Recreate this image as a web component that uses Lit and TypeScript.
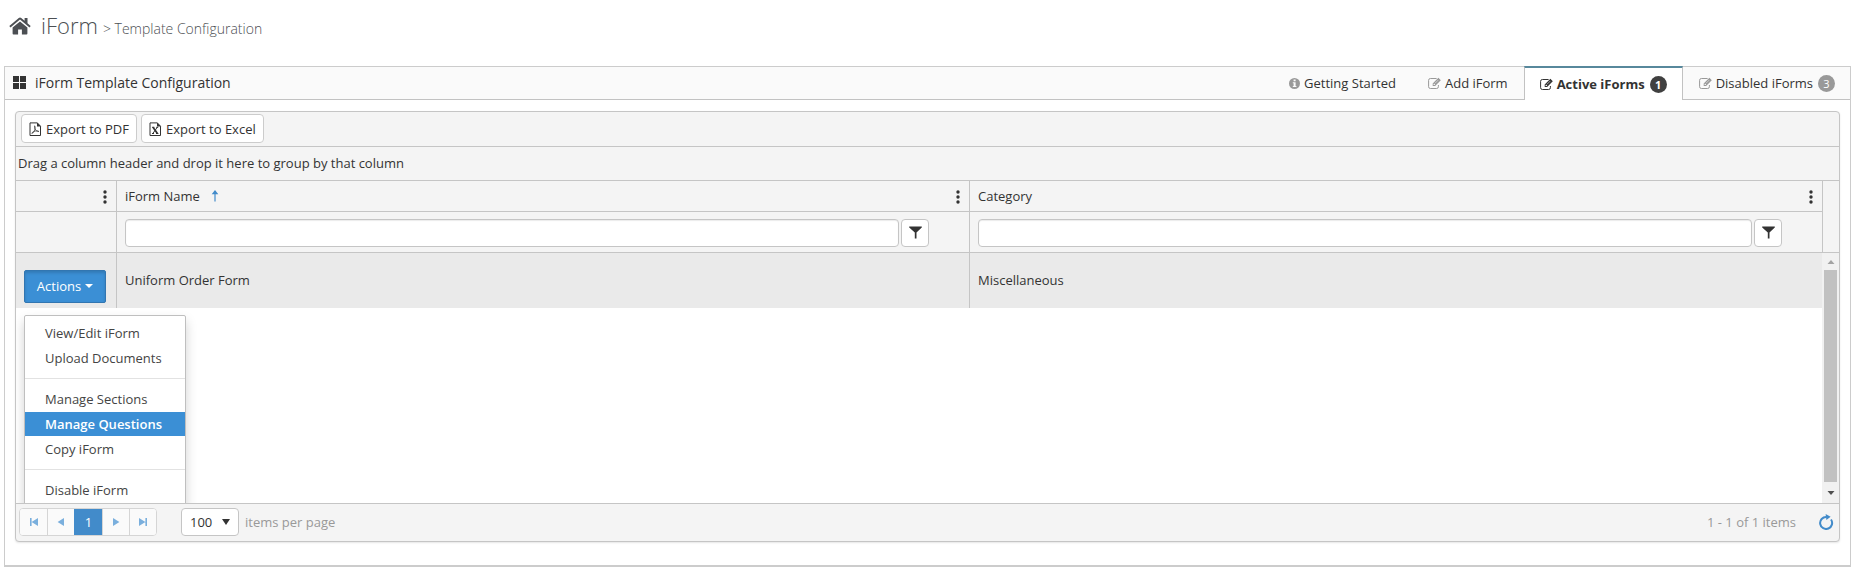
import { LitElement, html, css, svg, nothing } from "lit";
import { customElement, state } from "lit/decorators.js";
import { classMap } from "lit/directives/class-map.js";

type TabIcon = "info" | "edit";

interface Tab {
  id: string;
  label: string;
  icon: TabIcon;
  count?: number;
}

const TABS: Tab[] = [
  { id: "start", label: "Getting Started", icon: "info" },
  { id: "add", label: "Add iForm", icon: "edit" },
  { id: "active", label: "Active iForms", icon: "edit", count: 1 },
  { id: "disabled", label: "Disabled iForms", icon: "edit", count: 3 },
];

const MENU: string[][] = [
  ["View/Edit iForm", "Upload Documents"],
  ["Manage Sections", "Manage Questions", "Copy iForm"],
  ["Disable iForm"],
];

const ROWS = [{ name: "Uniform Order Form", category: "Miscellaneous" }];

const homeIcon = html`<svg width="22" height="18" viewBox="0 0 22 18" aria-hidden="true">
  <path fill="#4c4f53" d="M11 4.4 3.6 10.6V16.6q0 .9.9.9H9.1V12.4H12.9V17.5H17.5q.9 0 .9-.9V10.6ZM21.7 9 18.5 6.3V1H15.6V3.8L12.2 1Q11 .1 9.8 1L.3 9 1.5 10.4 11 2.6 20.5 10.4Z"/>
</svg>`;

const gridIcon = html`<svg width="14" height="14" viewBox="0 0 14 14" aria-hidden="true">
  <path fill="#333" d="M0 0H6V6H0ZM7 0H13V6H7ZM0 7H6V13H0ZM7 7H13V13H7Z"/>
</svg>`;

const infoIcon = html`<svg width="11" height="13" viewBox="0 0 11 13" aria-hidden="true">
  <circle cx="5.5" cy="6.5" r="5.5" fill="currentColor"/>
  <path fill="#fafafa" d="M4.6 2.4H6.6V4.2H4.6ZM3.8 5.2H6.6V8.9H7.4V10H3.8V8.9H4.6V6.3H3.8Z"/>
</svg>`;

const editIcon = html`<svg width="13" height="13" viewBox="0 0 13 13" aria-hidden="true">
  <path fill="none" stroke="currentColor" d="M8.6 1.5H2.4Q.6 1.5.6 3.3V9.7Q.6 11.5 2.4 11.5H8.6Q10.4 11.5 10.4 9.7V8"/>
  <path fill="currentColor" fill-rule="evenodd" d="M4.7 6.5 10.4.8 12.8 3.2 7.1 8.9H4.7ZM5.6 6.9V8H6.7L7.2 7.5 6.1 6.4ZM7 6 7.3 6.3 10.4 3.2 10.1 2.9Z"/>
</svg>`;

const fileShape = svg`<path fill="#fff" stroke="#333" stroke-width="1" d="M1 .9H8.3L11.5 4.2V13.5H1Z"/>
  <path fill="#333" d="M8 .4 12 4.5H8Z"/>`;

const pdfIcon = html`<svg width="13" height="14" viewBox="0 0 13 14" aria-hidden="true">
  ${fileShape}
  <path fill="none" stroke="#555" stroke-width=".9" d="M5.6 3.8Q5.2 6 6.6 8 8 9.8 10 9.6 9.6 8.4 6.2 9 3 9.8 2.8 11.4 4.4 11.6 5.8 7.8 6.6 5 5.6 3.8"/>
</svg>`;

const excelIcon = html`<svg width="13" height="14" viewBox="0 0 13 14" aria-hidden="true">
  ${fileShape}
  <path fill="none" stroke="#333" stroke-width="1.7" d="M4 5.2 8.4 11.6"/>
  <path fill="none" stroke="#333" stroke-width="1" d="M8.3 5.2 3.8 11.6M3 5.3H5.4M7.2 5.3H9.2M3 11.5H5M7 11.5H9.4"/>
</svg>`;

const dotsIcon = html`<svg width="4" height="14" viewBox="0 0 4 14" aria-hidden="true">
  <circle fill="#333" cx="2" cy="2" r="1.7"/><circle fill="#333" cx="2" cy="7" r="1.7"/><circle fill="#333" cx="2" cy="12" r="1.7"/>
</svg>`;

const sortIcon = html`<svg width="8" height="12" viewBox="0 0 8 12" aria-hidden="true">
  <path fill="#428bca" d="M4 0 7.3 4.2H4.6V11.5H3.4V4.2H.7Z"/>
</svg>`;

const funnelIcon = html`<svg width="13" height="13" viewBox="0 0 13 13" aria-hidden="true">
  <path fill="#333" d="M.2.6H12.8V1.4L7.5 6.6V12.6H5.8V6.6L.2 1.4Z"/>
</svg>`;

const refreshIcon = html`<svg width="16" height="16" viewBox="0 0 16 16" aria-hidden="true">
  <path fill="none" stroke="#428bca" stroke-width="2" d="M8.5 3A6 6 0 1 0 13 5.5"/>
  <path fill="#428bca" d="M7.6 0 12.6 2.8 8.4 6Z"/>
</svg>`;

const PAGER_PATHS: Record<string, string> = {
  first: "M1 1H2.6V9H1ZM9 1V9L2.6 5Z",
  prev: "M8 1V9L1.6 5Z",
  next: "M2 1V9L8.4 5Z",
  last: "M7.4 1H9V9H7.4ZM1 1V9L7.4 5Z",
};

@customElement("app-root")
export class AppRoot extends LitElement {
  static styles = css`
    :host {
      display: block;
      padding: 11px 4px 16px;
      font-family: "Open Sans", "Noto Sans", sans-serif;
      font-size: 13px;
      line-height: 18px;
      color: #333;
      background: #fff;
    }
    *, *::before, *::after { box-sizing: border-box; }
    button, input, select { font: inherit; color: inherit; margin: 0; }
    button { cursor: pointer; padding: 0; }
    svg { display: block; flex: none; }

    .page-title {
      display: flex;
      align-items: baseline;
      gap: 5px;
      margin: 0 0 27px;
      padding-left: 5px;
      font-size: 22px;
      font-weight: 300;
      line-height: 28px;
      color: #4c4f53;
    }
    .page-title .home { align-self: center; margin: 2px 5px 0 0; }
    .page-title .sub { font-size: 14px; line-height: 18px; }

    .panel { border: 1px solid #ccc; border-bottom-width: 2px; }
    .panel-head {
      display: flex;
      align-items: stretch;
      height: 33px;
      background: #fafafa;
      border-bottom: 1px solid #c2c2c2;
    }
    .panel-title {
      display: flex;
      align-items: center;
      gap: 8px;
      flex: 1;
      margin: 0;
      padding-left: 8px;
      font-size: 14px;
      font-weight: 400;
    }
    .tabs { display: flex; }
    .tab {
      display: flex;
      align-items: center;
      gap: 4px;
      padding: 0 15px;
      border: 0 solid transparent;
      border-width: 0 1px;
      color: #333;
      text-decoration: none;
    }
    .tab:last-child { border-right-width: 0; }
    .tab svg { color: #999; }
    .tab.on {
      margin: -1px 0;
      border-top: 2px solid #57889c;
      border-left-color: #c2c2c2;
      border-right-color: #c2c2c2;
      background: #fff;
      font-weight: 700;
    }
    .tab.on svg { color: #333; }
    .badge {
      width: 17px;
      height: 17px;
      margin-left: 1px;
      border-radius: 50%;
      background: #999;
      color: #fff;
      font-size: 11px;
      font-weight: 400;
      line-height: 17px;
      text-align: center;
    }
    .tab.on .badge { background: #404040; font-weight: 700; }

    .panel-body { padding: 11px 10px 23px; }
    .grid {
      border: 1px solid #c5c5c5;
      border-radius: 4px;
      background: #f4f4f4;
      overflow: hidden;
      box-shadow: 0 1px 2px rgba(0, 0, 0, 0.1);
    }
    .toolbar {
      display: flex;
      gap: 4px;
      padding: 2px 5px 3px;
      border-bottom: 1px solid #c5c5c5;
    }
    .tool {
      display: flex;
      align-items: center;
      gap: 4px;
      height: 29px;
      padding: 0 7px;
      border: 1px solid #ccc;
      border-radius: 4px;
      background: #fff;
    }
    .group-hint { margin: 0; padding: 7px 2px 8px; border-bottom: 1px solid #c5c5c5; }

    .head { display: flex; border-bottom: 1px solid #c5c5c5; }
    .head-gap { width: 17px; border-left: 1px solid #c5c5c5; }
    table { flex: 1; width: 0; table-layout: fixed; border-collapse: separate; border-spacing: 0; }
    .c-actions { width: 100px; }
    th, td { padding: 0 8px; text-align: left; font-weight: 400; }
    th + th, td + td { border-left: 1px solid #c5c5c5; }
    th { height: 31px; border-bottom: 1px solid #c5c5c5; }
    .filters td { height: 40px; padding-top: 1px; }
    .th-in { display: flex; align-items: center; gap: 11px; }
    .dots {
      display: flex;
      margin-left: auto;
      padding: 1px 1px 0;
      border: 0;
      background: none;
    }
    .filter { display: flex; gap: 2px; padding-right: 32px; }
    .filter input {
      flex: 1;
      min-width: 0;
      height: 28px;
      padding: 0 6px;
      border: 1px solid #c5c5c5;
      border-radius: 4px;
      background: #fff;
      box-shadow: inset 0 1px 1px rgba(0, 0, 0, 0.08);
    }
    .funnel {
      display: grid;
      place-items: center;
      width: 28px;
      height: 28px;
      border: 1px solid #c5c5c5;
      border-radius: 4px;
      background: #fff;
    }

    .content {
      display: flex;
      position: relative;
      height: 250px;
      overflow: hidden;
      background: #fff;
      align-items: flex-start;
    }
    .row td { height: 55px; padding-bottom: 1px; background: #eaeaea; }
    .row td:first-child { padding-top: 12px; }
    .action {
      display: flex;
      align-items: center;
      justify-content: center;
      gap: 4px;
      width: 82px;
      height: 33px;
      border: 1px solid #3276b1;
      border-radius: 2px;
      background: #3b8fd5;
      color: #fff;
      box-shadow: inset 0 2px 3px rgba(0, 0, 0, 0.15);
    }
    .menu {
      position: absolute;
      top: 62px;
      left: 8px;
      display: flex;
      flex-direction: column;
      gap: 1px;
      width: 162px;
      margin: 0;
      padding: 5px 0;
      border: 1px solid #bfbfbf;
      border-radius: 2px;
      background: #fff;
      box-shadow: 0 6px 12px rgba(0, 0, 0, 0.18);
      list-style: none;
    }
    .menu a {
      display: block;
      padding: 0 20px;
      line-height: 24px;
      color: #444;
      text-decoration: none;
    }
    .menu a.hot { background: #3b8fd5; color: #fff; font-weight: 600; }
    .sep { height: 1px; margin: 7px 0; background: #e2e2e2; }

    .scroll {
      display: flex;
      flex-direction: column;
      align-items: center;
      gap: 4px;
      width: 17px;
      height: 100%;
      padding: 5px 0;
      background: #f1f1f1;
    }
    .thumb { flex: 1; width: 13px; background: #c1c1c1; }

    .pager {
      display: flex;
      align-items: center;
      height: 38px;
      padding: 0 5px 1px 3px;
      border-top: 1px solid #c5c5c5;
      color: #999;
    }
    .pages {
      display: flex;
      border: 1px solid #d5d5d5;
      border-radius: 4px;
      background: #fff;
      overflow: hidden;
    }
    .pages button {
      display: grid;
      place-items: center;
      width: 27px;
      height: 26px;
      border: 0;
      background: #fafafa;
      color: #7aafdd;
    }
    .pages button + button { border-left: 1px solid #d5d5d5; }
    .pages button.on { width: 28px; background: #428bca; color: #fff; border-color: #428bca; }
    .size { display: flex; align-items: center; gap: 6px; margin-left: 24px; }
    .size-box { display: grid; align-items: center; width: 58px; }
    .size-box > * { grid-area: 1 / 1; }
    .size-box svg { justify-self: end; margin-right: 9px; pointer-events: none; }
    .size select {
      appearance: none;
      width: 100%;
      height: 28px;
      padding: 0 8px;
      border: 1px solid #c5c5c5;
      border-radius: 4px;
      background: #fff;
      color: #333;
    }
    .info { margin-left: auto; }
    .refresh { margin-left: 22px; border: 0; background: none; }
  `;

  @state() private tab = "active";
  @state() private hot = "Manage Questions";
  @state() private open = true;

  private renderTab(t: Tab) {
    const on = t.id === this.tab;
    return html`<a
      href="#${t.id}"
      class=${classMap({ tab: true, on })}
      aria-current=${on ? "page" : "false"}
      @click=${() => (this.tab = t.id)}
      >${t.icon === "info" ? infoIcon : editIcon}<span>${t.label}</span
      >${t.count ? html`<span class="badge">${t.count}</span>` : nothing}</a
    >`;
  }

  private renderDots(name: string) {
    return html`<button class="dots" aria-label="${name} column settings">${dotsIcon}</button>`;
  }

  private renderFilter(name: string) {
    return html`<div class="filter">
      <input type="text" aria-label="Filter ${name}" />
      <button class="funnel" aria-label="${name} filter options">${funnelIcon}</button>
    </div>`;
  }

  private renderPageButton(kind: string) {
    return html`<button aria-label="Go to the ${kind} page">
      <svg width="10" height="10" viewBox="0 0 10 10" aria-hidden="true">
        <path fill="currentColor" d=${PAGER_PATHS[kind]} />
      </svg>
    </button>`;
  }

  private renderMenu() {
    return html`<ul class="menu">
      ${MENU.map(
        (group, i) => html`${i ? html`<li class="sep" role="separator"></li>` : nothing}
        ${group.map(
          (item) => html`<li>
            <a href="#" class=${classMap({ hot: item === this.hot })} @mouseenter=${() => (this.hot = item)}>${item}</a>
          </li>`
        )}`
      )}
    </ul>`;
  }

  private cols = () => html`<colgroup><col class="c-actions" /><col /><col /></colgroup>`;

  render() {
    return html`
      <h1 class="page-title">
        <span class="home">${homeIcon}</span>
        <span>iForm</span>
        <span class="sub">&gt; Template Configuration</span>
      </h1>
      <section class="panel">
        <header class="panel-head">
          <h2 class="panel-title">${gridIcon}<span>iForm Template Configuration</span></h2>
          <nav class="tabs">${TABS.map((t) => this.renderTab(t))}</nav>
        </header>
        <div class="panel-body">
          <div class="grid">
            <div class="toolbar">
              <button class="tool">${pdfIcon}Export to PDF</button>
              <button class="tool">${excelIcon}Export to Excel</button>
            </div>
            <p class="group-hint">Drag a column header and drop it here to group by that column</p>
            <div class="head">
              <table>
                ${this.cols()}
                <thead>
                  <tr>
                    <th><div class="th-in">${this.renderDots("Actions")}</div></th>
                    <th><div class="th-in">iForm Name ${sortIcon}${this.renderDots("iForm Name")}</div></th>
                    <th><div class="th-in">Category ${this.renderDots("Category")}</div></th>
                  </tr>
                  <tr class="filters">
                    <td></td>
                    <td>${this.renderFilter("iForm Name")}</td>
                    <td>${this.renderFilter("Category")}</td>
                  </tr>
                </thead>
              </table>
              <div class="head-gap"></div>
            </div>
            <div class="content">
              <table>
                ${this.cols()}
                <tbody>
                  ${ROWS.map(
                    (r) => html`<tr class="row">
                      <td>
                        <button class="action" aria-expanded=${this.open} @click=${() => (this.open = !this.open)}>
                          Actions
                          <svg width="8" height="4" viewBox="0 0 8 4" aria-hidden="true"><path fill="#fff" d="M0 0H8L4 4Z" /></svg>
                        </button>
                      </td>
                      <td>${r.name}</td>
                      <td>${r.category}</td>
                    </tr>`
                  )}
                </tbody>
              </table>
              <div class="scroll" aria-hidden="true">
                <svg width="8" height="8" viewBox="0 0 8 8"><path fill="#a3a3a3" d="M.5 6H7.5L4 2Z" /></svg>
                <div class="thumb"></div>
                <svg width="8" height="12" viewBox="0 0 8 12"><path fill="#505050" d="M.5 5H7.5L4 9Z" /></svg>
              </div>
              ${this.open ? this.renderMenu() : nothing}
            </div>
            <footer class="pager">
              <div class="pages">
                ${this.renderPageButton("first")}${this.renderPageButton("prev")}
                <button class="on" aria-current="page">1</button>
                ${this.renderPageButton("next")}${this.renderPageButton("last")}
              </div>
              <label class="size">
                <span class="size-box">
                  <select>
                    <option>100</option>
                    <option>50</option>
                    <option>25</option>
                  </select>
                  <svg width="8" height="8" viewBox="0 0 8 8" aria-hidden="true"><path fill="#333" d="M0 1H8L4 7Z" /></svg>
                </span>
                items per page
              </label>
              <span class="info">1 - 1 of 1 items</span>
              <button class="refresh" aria-label="Refresh">${refreshIcon}</button>
            </footer>
          </div>
        </div>
      </section>
    `;
  }
}
